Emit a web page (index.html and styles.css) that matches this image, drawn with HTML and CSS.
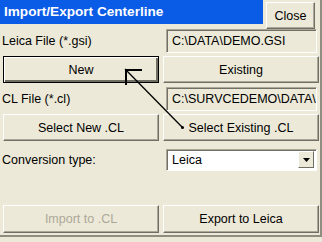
FILE: index.html
```html
<!DOCTYPE html>
<html lang="en">
<head>
  <meta charset="UTF-8" />
  <title>Import/Export Centerline</title>
  <link rel="stylesheet" href="styles.css">
</head>
<body>
  <div class="dialog">
    <div class="head">
      <div class="title">Import/Export Centerline</div>
      <button class="btn close">Close</button>
    </div>

    <div class="row">
      <span class="label">Leica File (*.gsi)</span>
      <div class="field">C:\DATA\DEMO.GSI</div>
    </div>
    <div class="row">
      <button class="btn default">New</button>
      <button class="btn">Existing</button>
    </div>

    <div class="row">
      <span class="label">CL File (*.cl)</span>
      <div class="field">C:\SURVCEDEMO\DATA\</div>
    </div>
    <div class="row">
      <button class="btn">Select New .CL</button>
      <button class="btn">Select Existing .CL</button>
    </div>

    <div class="row conv">
      <span class="label">Conversion type:</span>
      <div class="combo">
        <span>Leica</span>
        <span class="drop"><svg width="7" height="4" viewBox="0 0 7 4"><path d="M0 0h7L3.5 4z" fill="#000"/></svg></span>
      </div>
    </div>

    <div class="row bottom">
      <button class="btn" disabled>Import to .CL</button>
      <button class="btn">Export to Leica</button>
    </div>

    <!-- pointer drawn over the dialog -->
    <svg class="pointer" width="322" height="242" viewBox="0 0 322 242">
      <path d="M125 69L182 127" stroke="#000" stroke-width="1.3" fill="none"/>
      <path d="M126 85V70H142" stroke="#000" stroke-width="2" fill="none"/>
      <circle cx="182.5" cy="127.5" r="1.5" fill="#000"/>
    </svg>
  </div>
</body>
</html>
```

FILE: styles.css
```css
* { margin: 0; padding: 0; box-sizing: border-box; }
body {
  font-family: "Liberation Sans", Arial, sans-serif;
  font-size: 12.5px;
  background: #ece9d8;
  color: #000;
}
.dialog {
  position: relative;
  width: 322px;
  height: 237px;
  background: #ece9d8;
  padding: 0 3px 0 3px;
  border-right: 2px solid #8f8d80;
  border-bottom: 2px solid #8f8d80;
}
.head {
  display: flex;
  gap: 3px;
  height: 24px;
  margin: 0 0 2px -3px;
}
.title {
  flex: 1;
  background: #0a5ce6;
  color: #fff;
  font-weight: bold;
  font-size: 13.6px;
  padding: 4px 0 0 4px;
  height: 24px;
}
.close {
  width: 49px;
  height: 22px;
  margin: 2px 2px 0 0;
}
.row {
  display: grid;
  grid-template-columns: 156px 156px;
  column-gap: 4px;
  align-items: center;
  height: 29px;
}
.label {
  margin-left: -1px;
}
.field {
  height: 24px;
  margin: 0 2px 0 3px;
  padding: 4px 0 0 5px;
  white-space: nowrap;
  overflow: hidden;
  border: 1px solid;
  border-color: #aca899 #fff #fff #aca899;
  box-shadow: inset 1px 1px 0 #716f64;
}
.btn {
  font-family: inherit;
  font-size: 12.5px;
  color: #000;
  height: 27px;
  background: #ece9d8;
  border: 1px solid;
  border-color: #fff #716f64 #716f64 #fff;
  box-shadow: inset -1px -1px 0 #aca899;
}
.btn.default {
  border-color: #000;
  box-shadow: inset 1px 1px 0 #fff, inset -2px -2px 0 #716f64;
}
.btn:disabled {
  color: #aca899;
}
.conv {
  margin-top: 3px;
}
.combo {
  display: flex;
  justify-content: space-between;
  align-items: center;
  height: 22px;
  margin: 0 2px 0 3px;
  background: #fff;
  border: 1px solid;
  border-color: #aca899 #fff #fff #aca899;
  box-shadow: inset 1px 1px 0 #716f64;
  padding: 0 2px 0 5px;
}
.drop {
  width: 16px;
  height: 17px;
  background: #ece9d8;
  display: flex;
  align-items: center;
  justify-content: center;
  border: 1px solid;
  border-color: #fff #716f64 #716f64 #fff;
}
.bottom {
  margin-top: 30px;
}
.bottom .btn {
  height: 28px;
}
.pointer {
  position: absolute;
  left: 0;
  top: 0;
  pointer-events: none;
}
```
